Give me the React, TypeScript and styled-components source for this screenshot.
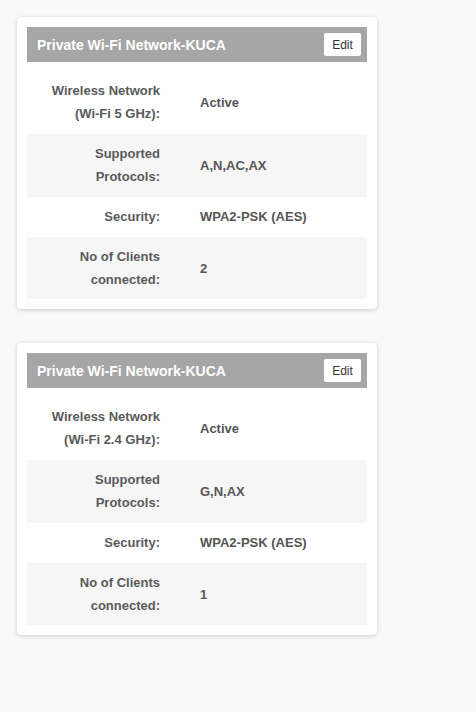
import React from "react";
import styled, { createGlobalStyle } from "styled-components";

const GlobalStyle = createGlobalStyle`
  html, body {
    margin: 0;
    padding: 0;
    background: #f9f9f9;
    font-family: "Liberation Sans", Arial, sans-serif;
  }
`;

const Page = styled.div`
  padding: 17px;
  display: flex;
  flex-direction: column;
  gap: 34px;
  align-items: flex-start;
`;

const Card = styled.section`
  width: 360px;
  box-sizing: border-box;
  background: #fff;
  border-radius: 4px;
  box-shadow: 0 1px 4px rgba(0, 0, 0, 0.18);
  padding: 10px;
`;

const Header = styled.div`
  height: 35px;
  background: #a6a6a6;
  display: flex;
  align-items: center;
  justify-content: space-between;
  padding: 0 6px 0 10px;
`;

const Title = styled.h3`
  margin: 0;
  color: #fff;
  font-size: 14px;
  font-weight: bold;
`;

const EditButton = styled.button`
  width: 37px;
  height: 23px;
  border: none;
  border-radius: 2px;
  background: #fff;
  color: #333;
  font-family: "Liberation Sans", Arial, sans-serif;
  font-size: 12px;
  padding: 0;
  cursor: pointer;
`;

const Table = styled.div`
  margin-top: 9px;
  display: flex;
  flex-direction: column;
`;

const Row = styled.div<{ $alt?: boolean }>`
  display: grid;
  grid-template-columns: 143px 1fr;
  align-items: center;
  padding: 8px 0 9px;
  background: ${(p) => (p.$alt ? "#f6f6f6" : "#fff")};
  line-height: 23px;
  font-size: 13px;
  font-weight: bold;

  &:last-child {
    padding-bottom: 8px;
  }
`;

const Label = styled.div`
  text-align: right;
  padding-right: 10px;
  color: #5a5a5a;
`;

const Value = styled.div`
  padding-left: 30px;
  color: #555;
`;

type Net = { band: string; protocols: string; clients: string };

const nets: Net[] = [
  { band: "5 GHz", protocols: "A,N,AC,AX", clients: "2" },
  { band: "2.4 GHz", protocols: "G,N,AX", clients: "1" },
];

function NetworkCard({ net }: { net: Net }) {
  return (
    <Card>
      <Header>
        <Title>Private Wi-Fi Network-KUCA</Title>
        <EditButton>Edit</EditButton>
      </Header>
      <Table>
        <Row>
          <Label>
            Wireless Network
            <br />
            (Wi-Fi {net.band}):
          </Label>
          <Value>Active</Value>
        </Row>
        <Row $alt>
          <Label>
            Supported
            <br />
            Protocols:
          </Label>
          <Value>{net.protocols}</Value>
        </Row>
        <Row>
          <Label>Security:</Label>
          <Value>WPA2-PSK (AES)</Value>
        </Row>
        <Row $alt>
          <Label>
            No of Clients
            <br />
            connected:
          </Label>
          <Value>{net.clients}</Value>
        </Row>
      </Table>
    </Card>
  );
}

export default function App() {
  return (
    <>
      <GlobalStyle />
      <Page>
        {nets.map((n) => (
          <NetworkCard key={n.band} net={n} />
        ))}
      </Page>
    </>
  );
}
